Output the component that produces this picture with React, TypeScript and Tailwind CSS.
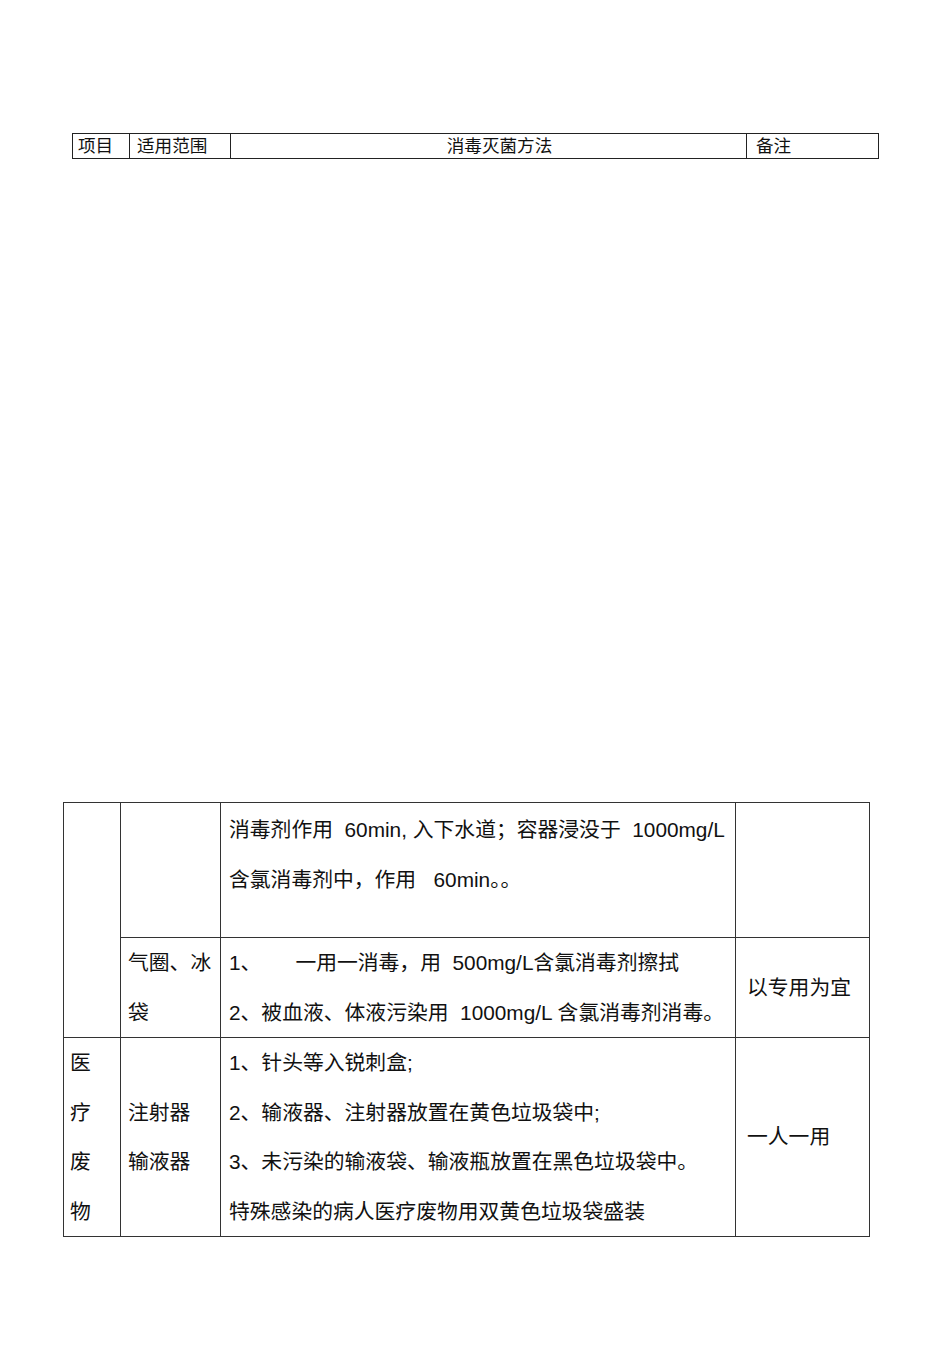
import React from 'react'

const font = { fontFamily: '"Liberation Sans", "Noto Sans CJK SC", sans-serif' }

export default function App() {
  return (
    <div className="min-h-[1345px] w-[950px] bg-white text-[#111]" style={font}>
      <div className="pt-[133px] pl-[72px]">
        <table className="w-[806px] table-fixed border-collapse text-[17.6px] leading-[23px]">
          <colgroup>
            <col className="w-[57px]" />
            <col className="w-[101px]" />
            <col className="w-[516px]" />
            <col className="w-[132px]" />
          </colgroup>
          <tbody>
            <tr className="h-[24px]">
              <td className="border border-[#222] pl-[5px] pt-[1px]">项目</td>
              <td className="border border-[#222] pl-[7px] pt-[1px]">适用范围</td>
              <td className="border border-[#222] pl-[22px] pt-[1px] text-center">消毒灭菌方法</td>
              <td className="border border-[#222] pl-[9px] pt-[1px]">备注</td>
            </tr>
          </tbody>
        </table>
      </div>

      <div className="mt-[643px] pl-[63px]">
        <table className="w-[806px] table-fixed border-collapse text-[20.8px] leading-[49.5px]">
          <colgroup>
            <col className="w-[57px]" />
            <col className="w-[100px]" />
            <col className="w-[515px]" />
            <col className="w-[134px]" />
          </colgroup>
          <tbody>
            <tr className="h-[135px]">
              <td rowSpan={2} className="border border-[#333]"></td>
              <td className="border border-[#333]"></td>
              <td className="border border-[#333] pl-[8px] pt-[2px] align-top whitespace-pre">
                <div>消毒剂作用  60min, 入下水道；容器浸没于  1000mg/L</div>
                <div>含氯消毒剂中，作用   60min。。</div>
              </td>
              <td className="border border-[#333]"></td>
            </tr>
            <tr className="h-[99px]">
              <td className="border border-[#333] pl-[7px] align-top">
                <div>气圈、冰</div>
                <div>袋</div>
              </td>
              <td className="border border-[#333] pl-[8px] align-top whitespace-pre">
                <div>
                  1、<span className="ml-[34px]">一用一消毒，用  500mg/L含氯消毒剂擦拭</span>
                </div>
                <div>2、被血液、体液污染用  1000mg/L 含氯消毒剂消毒。</div>
              </td>
              <td className="border border-[#333] pl-[11px]">以专用为宜</td>
            </tr>
            <tr className="h-[198px]">
              <td className="border border-[#333] pl-[6px] align-top">
                <div>医</div>
                <div>疗</div>
                <div>废</div>
                <div>物</div>
              </td>
              <td className="border border-[#333] pl-[7px]">
                <div>注射器</div>
                <div>输液器</div>
              </td>
              <td className="border border-[#333] pl-[8px] align-top">
                <div>1、针头等入锐刺盒;</div>
                <div>2、输液器、注射器放置在黄色垃圾袋中;</div>
                <div>3、未污染的输液袋、输液瓶放置在黑色垃圾袋中。</div>
                <div>特殊感染的病人医疗废物用双黄色垃圾袋盛装</div>
              </td>
              <td className="border border-[#333] pl-[11px]">一人一用</td>
            </tr>
          </tbody>
        </table>
      </div>
    </div>
  )
}
